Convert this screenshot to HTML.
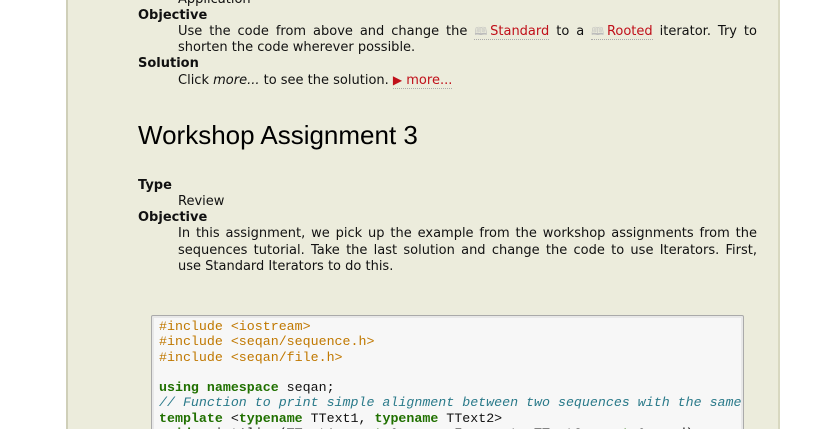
<!DOCTYPE html>
<html><head><meta charset="utf-8"><style>
html,body{margin:0;width:826px;height:429px;overflow:hidden}
body{position:relative;background:#fff;font-family:"DejaVu Sans","Liberation Sans",sans-serif;font-size:13px;color:#111}
#p{position:absolute;left:66px;top:0;width:710px;height:429px;background:#ececdc;border-left:2px solid #cfcfb8;border-right:2px solid #d8d8c0}
.l{position:absolute;white-space:nowrap;line-height:16px}
.b{font-weight:bold;left:138px}
.d{left:178px;width:579px;text-align:justify;text-align-last:justify}
.n{text-align-last:auto}
.r{color:#c0101a;border-bottom:1px dotted #aaa}
.bk{color:#bbb;font-size:11px}
h1{position:absolute;left:138px;top:120px;margin:0;font:26px "Liberation Sans",sans-serif;color:#000}
#c{position:absolute;left:151px;top:315px;width:584px;height:120px;background:#f7f7f7;border:1px solid #aaa;border-radius:2px;box-shadow:inset 0 0 0 2px #e8e8e8;font:13.3px/15.3px "Liberation Mono",monospace;padding:3px 0 0 7px;white-space:pre;overflow:hidden}
.o{color:#c07800}.g{color:#207000;font-weight:bold}.i{color:#2a7a8a;font-style:italic}
</style></head><body>
<div id="p"></div>
<div class="l" style="left:178px;top:-8px">Application</div>
<div class="l b" style="top:8px">Objective</div>
<div class="l d" style="top:24px">Use the code from above and change the <span class="r"><span class="bk">🕮</span>Standard</span> to a <span class="r"><span class="bk">🕮</span>Rooted</span> iterator. Try to</div>
<div class="l d n" style="top:40px">shorten the code wherever possible.</div>
<div class="l b" style="top:56px">Solution</div>
<div class="l" style="left:178px;top:72px">Click <i>more...</i> to see the solution. <span class="r" style="color:#c0101a"><span style="font-size:12px">▶</span> more...</span></div>
<h1>Workshop Assignment 3</h1>
<div class="l b" style="top:178px">Type</div>
<div class="l" style="left:178px;top:194px">Review</div>
<div class="l b" style="top:210px">Objective</div>
<div class="l d" style="top:226px">In this assignment, we pick up the example from the workshop assignments from the</div>
<div class="l d" style="top:243px">sequences tutorial. Take the last solution and change the code to use Iterators. First,</div>
<div class="l d n" style="top:259px">use Standard Iterators to do this.</div>
<div id="c"><span class="o">#include &lt;iostream&gt;
#include &lt;seqan/sequence.h&gt;
#include &lt;seqan/file.h&gt;</span>

<span class="g">using namespace</span> seqan;
<span class="i">// Function to print simple alignment between two sequences with the same</span>
<span class="g">template</span> &lt;<span class="g">typename</span> TText1, <span class="g">typename</span> TText2&gt;
<span class="g">void</span> printAlign(TText1 <span class="g">const</span> &amp; genomeFragment, TText2 <span class="g">const</span> &amp; read)</div>
</body></html>
